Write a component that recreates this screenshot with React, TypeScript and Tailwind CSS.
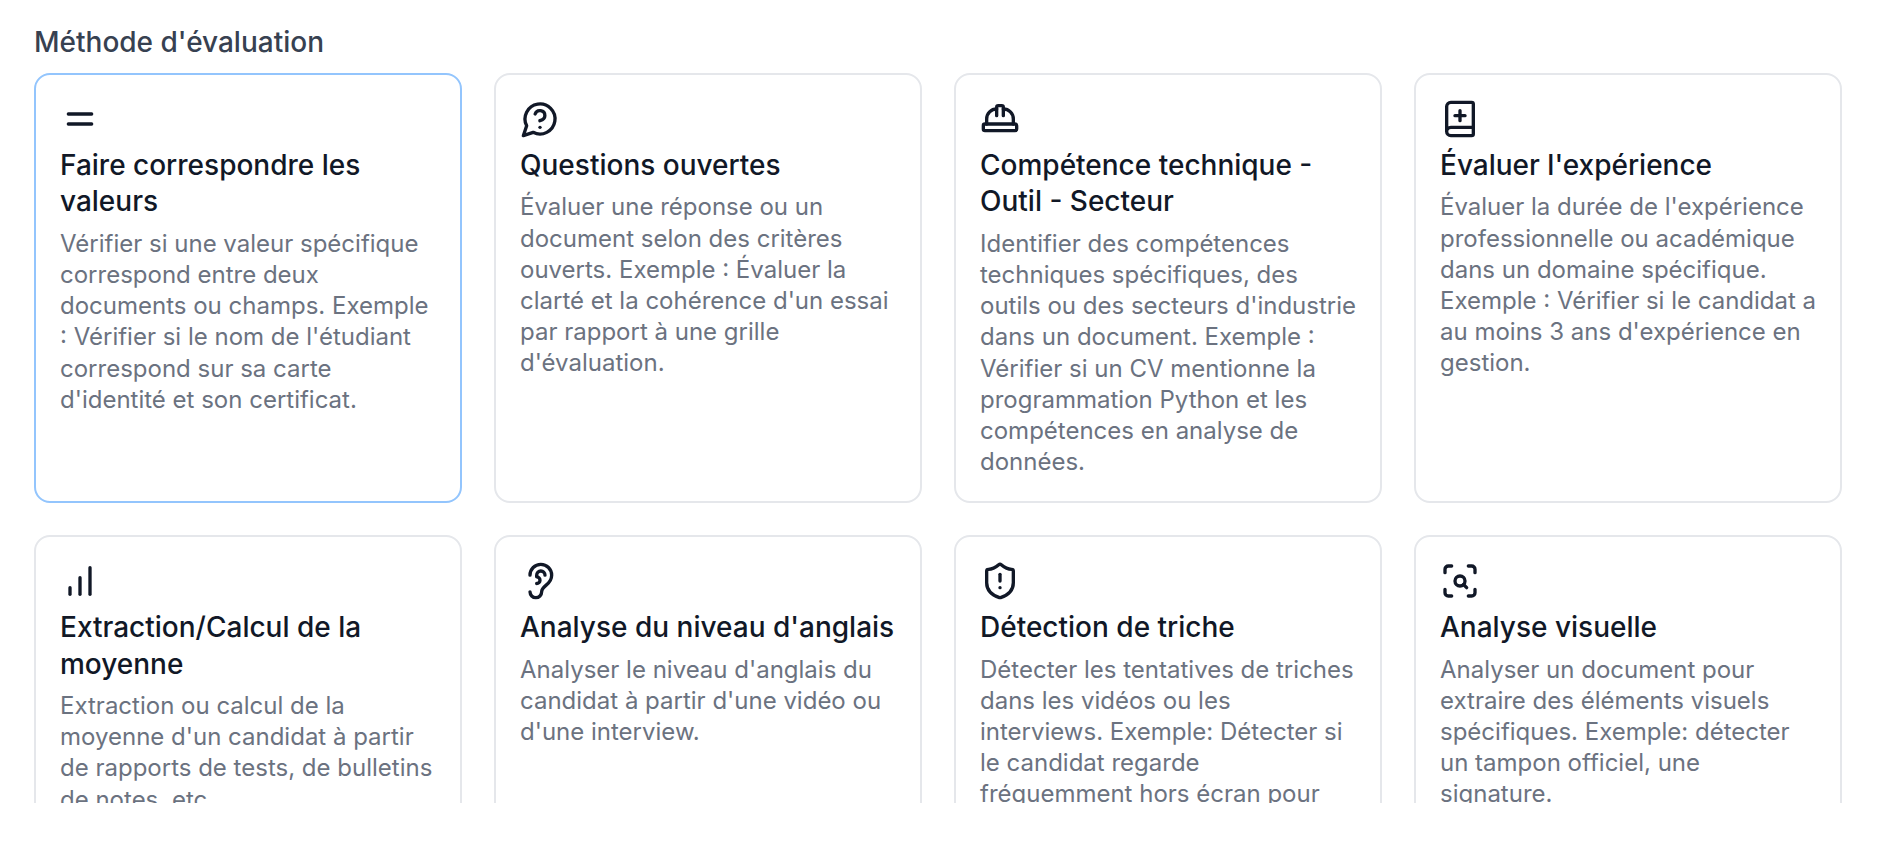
import { useState } from "react";
import type { ReactNode } from "react";
import { Ear, Equal, ScanSearch, ShieldAlert } from "lucide-react";

type Method = {
  id: string;
  title: string;
  description: string;
  icon: ReactNode;
};

function Icon({ children }: { children: ReactNode }) {
  return (
    <svg
      className="size-10"
      viewBox="0 0 24 24"
      fill="none"
      stroke="currentColor"
      strokeWidth="2"
      strokeLinecap="round"
      strokeLinejoin="round"
      aria-hidden="true"
    >
      {children}
    </svg>
  );
}

const methods: Method[] = [
  {
    id: "match",
    title: "Faire correspondre les valeurs",
    description:
      "Vérifier si une valeur spécifique correspond entre deux documents ou champs. Exemple : Vérifier si le nom de l'étudiant correspond sur sa carte d'identité et son certificat.",
    icon: <Equal className="size-10" />,
  },
  {
    id: "open",
    title: "Questions ouvertes",
    description:
      "Évaluer une réponse ou un document selon des critères ouverts. Exemple : Évaluer la clarté et la cohérence d'un essai par rapport à une grille d'évaluation.",
    icon: (
      <Icon>
        <path d="M7.9 20A9 9 0 1 0 4 16.1L2 22Z" />
        <path d="M9.09 9a3 3 0 0 1 5.83 1c0 2-3 3-3 3" />
        <path d="M12 17h.01" />
      </Icon>
    ),
  },
  {
    id: "skill",
    title: "Compétence technique - Outil - Secteur",
    description:
      "Identifier des compétences techniques spécifiques, des outils ou des secteurs d'industrie dans un document. Exemple : Vérifier si un CV mentionne la programmation Python et les compétences en analyse de données.",
    icon: (
      <Icon>
        <path d="M2 18a1 1 0 0 0 1 1h18a1 1 0 0 0 1-1v-2a1 1 0 0 0-1-1H3a1 1 0 0 0-1 1v2z" />
        <path d="M10 10V5a1 1 0 0 1 1-1h2a1 1 0 0 1 1 1v5" />
        <path d="M4 15v-3a6 6 0 0 1 6-6" />
        <path d="M14 6a6 6 0 0 1 6 6v3" />
      </Icon>
    ),
  },
  {
    id: "experience",
    title: "Évaluer l'expérience",
    description:
      "Évaluer la durée de l'expérience professionnelle ou académique dans un domaine spécifique. Exemple : Vérifier si le candidat a au moins 3 ans d'expérience en gestion.",
    icon: (
      <Icon>
        <path d="M4 19.5v-15A2.5 2.5 0 0 1 6.5 2H19a1 1 0 0 1 1 1v18a1 1 0 0 1-1 1H6.5a1 1 0 0 1 0-5H20" />
        <path d="M12 7v6" />
        <path d="M9 10h6" />
      </Icon>
    ),
  },
  {
    id: "average",
    title: "Extraction/Calcul de la moyenne",
    description:
      "Extraction ou calcul de la moyenne d'un candidat à partir de rapports de tests, de bulletins de notes, etc.",
    icon: (
      <Icon>
        <path d="M12 20V10" />
        <path d="M18 20V4" />
        <path d="M6 20v-4" />
      </Icon>
    ),
  },
  {
    id: "english",
    title: "Analyse du niveau d'anglais",
    description:
      "Analyser le niveau d'anglais du candidat à partir d'une vidéo ou d'une interview.",
    icon: <Ear className="size-10" />,
  },
  {
    id: "cheating",
    title: "Détection de triche",
    description:
      "Détecter les tentatives de triches dans les vidéos ou les interviews. Exemple: Détecter si le candidat regarde fréquemment hors écran pour",
    icon: <ShieldAlert className="size-10" />,
  },
  {
    id: "visual",
    title: "Analyse visuelle",
    description:
      "Analyser un document pour extraire des éléments visuels spécifiques. Exemple: détecter un tampon officiel, une signature.",
    icon: <ScanSearch className="size-10" />,
  },
];

export default function App() {
  const [selected, setSelected] = useState("match");

  return (
    <main className="flex h-screen flex-col bg-white pt-6 pr-[38px] pb-[61px] pl-[34px] font-['Inter',sans-serif] [font-optical-sizing:none]">
      <h2 id="method-label" className="mb-[13px] text-[28px] leading-9 font-medium text-[#374151]">
        Méthode d'évaluation
      </h2>
      <div
        role="group"
        aria-labelledby="method-label"
        className="grid min-h-0 flex-1 grid-cols-4 content-start gap-8 overflow-y-auto [scrollbar-width:none]"
      >
        {methods.map((method) => (
          <button
            key={method.id}
            type="button"
            aria-pressed={selected === method.id}
            onClick={() => setSelected(method.id)}
            className={`flex flex-col items-start gap-2 rounded-2xl border-2 bg-white py-6 pr-[23px] pl-6 text-left text-[#111827] ${
              selected === method.id ? "border-[#93c5fd]" : "border-[#e5e7eb]"
            }`}
          >
            {method.icon}
            <span className="text-[28px] leading-[1.3] font-medium">{method.title}</span>
            <span className="text-2xl leading-[1.3] text-[#6b7280]">{method.description}</span>
          </button>
        ))}
      </div>
    </main>
  );
}
